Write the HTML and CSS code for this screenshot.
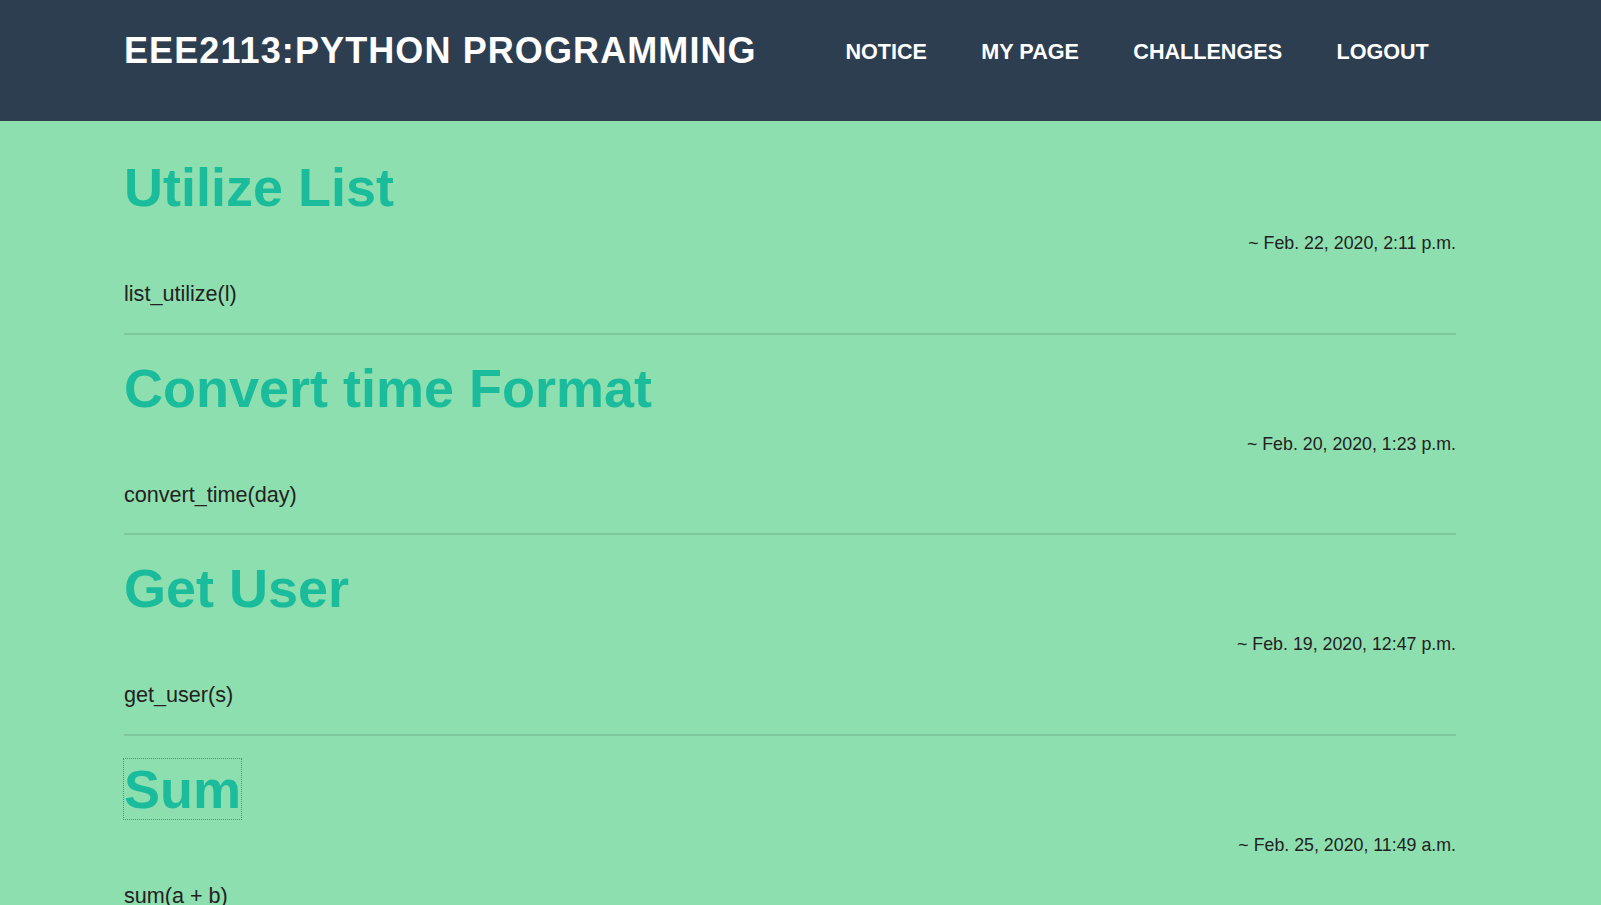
FILE: index.html
```html
<!DOCTYPE html>
<html lang="en">
<head>
<meta charset="utf-8">
<title>EEE2113:PYTHON PROGRAMMING</title>
<link rel="stylesheet" href="styles.css">
</head>
<body>
<header class="site-header">
  <a class="brand" href="#">EEE2113:PYTHON PROGRAMMING</a>
  <nav class="nav">
    <a class="nav-link" href="#">NOTICE</a>
    <a class="nav-link" href="#">MY PAGE</a>
    <a class="nav-link" href="#">CHALLENGES</a>
    <a class="nav-link" href="#">LOGOUT</a>
  </nav>
</header>
<main class="content">
  <article class="post">
    <h1 class="post-title"><a href="#">Utilize List</a></h1>
    <div class="post-date">~ Feb. 22, 2020, 2:11 p.m.</div>
    <p class="post-body">list_utilize(l)</p>
    <div class="post-rule"></div>
  </article>
  <article class="post">
    <h1 class="post-title"><a href="#">Convert time Format</a></h1>
    <div class="post-date">~ Feb. 20, 2020, 1:23 p.m.</div>
    <p class="post-body">convert_time(day)</p>
    <div class="post-rule"></div>
  </article>
  <article class="post">
    <h1 class="post-title"><a href="#">Get User</a></h1>
    <div class="post-date">~ Feb. 19, 2020, 12:47 p.m.</div>
    <p class="post-body">get_user(s)</p>
    <div class="post-rule"></div>
  </article>
  <article class="post">
    <h1 class="post-title"><a class="is-focused" href="#">Sum</a></h1>
    <div class="post-date">~ Feb. 25, 2020, 11:49 a.m.</div>
    <p class="post-body">sum(a + b)</p>
    <div class="post-rule"></div>
  </article>
</main>
</body>
</html>
```
FILE: styles.css
```css
html {
  overflow: hidden;
}

body {
  margin: 0;
  background: #8edfaf;
  color: #222222;
  font-family: "Liberation Sans", Arial, sans-serif;
  font-size: 18px;
}

.site-header {
  height: 121px;
  box-sizing: border-box;
  background: #2c3e50;
  padding: 30px 145px 0 124px;
  display: flex;
  align-items: flex-start;
  justify-content: space-between;
}

.brand {
  color: #ffffff;
  text-decoration: none;
  font-weight: bold;
  font-size: 36px;
  line-height: 42px;
  letter-spacing: 1.1px;
}

.nav {
  display: flex;
  margin-top: 9px;
}

.nav-link {
  color: #ffffff;
  text-decoration: none;
  font-weight: bold;
  font-size: 21.6px;
  line-height: 25px;
  padding: 0 27.2px;
}

.content {
  padding: 13px 145px 0 124px;
}

.post {
  display: flex;
  flex-direction: column;
}

.post-title {
  margin: 22px 0 0;
  font-size: 54px;
  line-height: 62px;
  font-weight: bold;
}

.post-title a {
  color: #1abc9c;
  text-decoration: none;
}

.post-title a.is-focused {
  outline: 1px dotted #24a882;
}

.post-date {
  margin-top: 15px;
  text-align: right;
  font-size: 17.8px;
  line-height: 21px;
}

.post-body {
  margin: 27px 0 0;
  font-size: 21.6px;
  line-height: 25px;
}

.post-rule {
  margin-top: 26.5px;
  height: 2px;
  background: rgba(0, 0, 0, 0.1);
}
```
